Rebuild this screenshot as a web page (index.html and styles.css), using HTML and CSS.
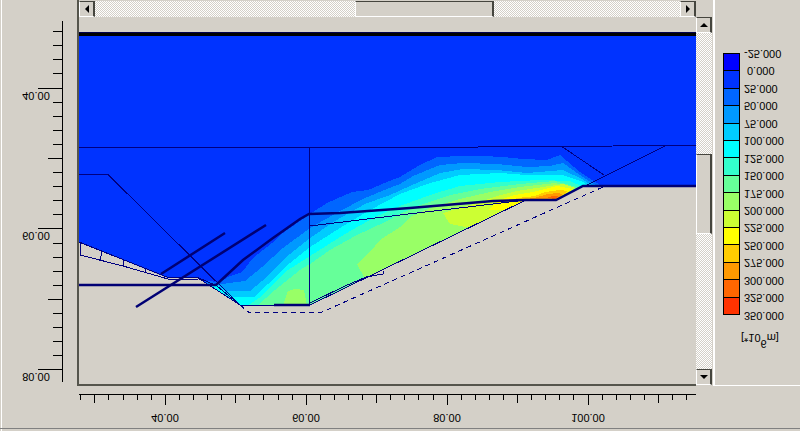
FILE: index.html
```html
<!DOCTYPE html>
<html lang="en">
<head>
<meta charset="utf-8">
<title>Bending moments</title>
<link rel="stylesheet" href="styles.css">
</head>
<body>
<main class="window">
  <div class="workspace">
    <svg class="ruler-left" viewBox="0 0 77 386" role="img" aria-label="Vertical ruler">
      <path class="tick" d="M62.500 21V382M53 31.500h9M53 45.500h9M53 59.500h9M53 73.500h9M38 88.500h24M53 102.500h9M53 116.500h9M53 130.500h9M53 144.500h9M48 158.500h14M53 172.500h9M53 186.500h9M53 200.500h9M53 214.500h9M38 228.500h24M53 243.500h9M53 257.500h9M53 271.500h9M53 285.500h9M48 299.500h14M53 313.500h9M53 327.500h9M53 341.500h9M53 355.500h9M38 369.500h24"/>
      <text class="label" x="36" y="100">40.00</text>
      <text class="label" x="36" y="240">60.00</text>
      <text class="label" x="36" y="381">80.00</text>
    </svg>

    <section class="view">
      <div class="scroll scroll-x">
        <button class="arrow" type="button" aria-label="Scroll left"><svg viewBox="0 0 8 8"><path d="M6 0V8L2 4z"/></svg></button>
        <div class="track"><span class="before"></span><span class="thumb"></span><span class="after"></span></div>
        <button class="arrow" type="button" aria-label="Scroll right"><svg viewBox="0 0 8 8"><path d="M2 0V8L6 4z"/></svg></button>
      </div>
      <svg class="plot" viewBox="79 17 617 367" role="img" aria-label="Contour plot">
        <defs>
          <clipPath id="soil"><path d="M79 36H696V186H583L556 200H526L310 305H240L198 278H168L79 242z"/></clipPath>
        </defs>
        <g clip-path="url(#soil)" shape-rendering="crispEdges">
          <path fill="#0033ff" d="M79 36H696V320H79z"/>
          <path fill="#0066ff" d="M205 281L220 282 228 277 242 272 253 258 272 243 280 235 310 214 327 203 352 192 368 190 387 182 400 177 420 165 437 157 463 156 483 156 503 157 523 159 547 160 560 155 567 161 580 172 603 187V320H200z"/>
          <path fill="#0099ff" d="M205 283L222 284 245 281 262 267 283 248 310 228 340 211 365 198 387 189 400 184 413 176 440 165 463 163 497 164 527 167 550 166 563 163 580 175 597 186V320H205z"/>
          <path fill="#00ccff" d="M205 284L218 285 226 291H250L262 281 285 258 310 238 335 221 365 204 390 195 410 186 440 173 463 169 497 170 527 173 563 170 582 179 593 186V320H205z"/>
          <path fill="#00ffff" d="M205 285L218 286 232 297H254L268 284 290 263 310 247 340 228 370 210 400 194 427 184 460 175 500 173 527 175 563 175 583 182 588 187V320H205z"/>
          <path fill="#33ffcc" d="M247 306L262 296 285 272 310 256 345 234 375 217 400 206 433 194 460 186 500 182 540 180 570 181 583 187V320H247z"/>
          <path fill="#66ff99" d="M257 306L275 290 300 270 310 264 330 250 355 236 385 222 400 214 420 205 450 195 480 189 520 184 555 181 577 187V320H257z"/>
          <path fill="#99ff66" d="M283 306L288 291 295 289 304 290 306 300 307 306zM357 264L370 252 380 240 400 227 410 217 430 208 460 199 490 192 520 187 555 183 576 188 556 200H526L383 274 364 277z"/>
          <path fill="#ccff33" d="M443 213L460 208 477 203 497 196 517 191 543 187 563 184 575 188 556 200H526L470 228 450 224z"/>
          <path fill="#ffff00" d="M489 210L493 205 503 199 515 195 533 192 557 186 573 189 556 200H526L507 210z"/>
          <path fill="#ffcc00" d="M512 201L517 198 535 196 545 192 560 190 568 191 556 200H526z"/>
          <path fill="#ff9900" d="M518 200L534 198 548 194 558 193 562 194 556 200z"/>
          <path fill="#ff6600" d="M547 198L552 196 558 196 556 199z"/>
        </g>
        <path fill="#00004d" d="M79 32H696V33H79z"/>
        <path fill="#000000" d="M79 33H696V36H79z"/>
        <g class="thin" shape-rendering="crispEdges">
          <path d="M79 147.500H427L530 146.500 696 145.500M309.500 147V305M79 174.500H108L241 306M561 146L604 175M583 187L665 146"/>
          <path d="M310 226L400 215 493 204 526 200M310 305L526 200M310 303L345 286 366 277 383 274V271"/>
          <path d="M79 242L168 277.500H198L217 286 240 305M80 255L123 266 168 279H198M80.500 243V255M102 252L100 261M123.500 259V266M145.500 268V272M198 278L240 305H310"/>
          <path class="dashed" d="M240 305L249 312.500H321L603 187"/>
        </g>
        <g class="thick">
          <path d="M79 285H216L243 260 273 238 300 219 309 214 340 213 410 208 493 201 526 200H556L583 186H696"/>
          <path d="M136 307L266 225M161 274L225 233"/>
          <path d="M274 305H310"/>
        </g>
      </svg>
    </section>

    <div class="scroll scroll-y">
      <button class="arrow" type="button" aria-label="Scroll up"><svg viewBox="0 0 8 8"><path d="M0 6H8L4 2z"/></svg></button>
      <div class="track"><span class="before"></span><span class="thumb"></span><span class="after"></span></div>
      <button class="arrow" type="button" aria-label="Scroll down"><svg viewBox="0 0 8 8"><path d="M0 2H8L4 6z"/></svg></button>
    </div>

    <aside class="legend">
      <div class="scale">
        <div class="swatches">
          <i class="c1"></i><i class="c2"></i><i class="c3"></i><i class="c4"></i><i class="c5"></i><i class="c6"></i><i class="c7"></i><i class="c8"></i><i class="c9"></i><i class="c10"></i><i class="c11"></i><i class="c12"></i><i class="c13"></i><i class="c14"></i><i class="c15"></i>
        </div>
        <ul class="values">
          <li>-25.000</li><li class="zero">0.000</li><li>25.000</li><li>50.000</li><li>75.000</li><li>100.000</li><li>125.000</li><li>150.000</li><li>175.000</li><li>200.000</li><li>225.000</li><li>250.000</li><li>275.000</li><li>300.000</li><li>325.000</li><li>350.000</li>
        </ul>
      </div>
      <p class="unit">[*10<sup>6</sup>m]</p>
    </aside>
  </div>

  <div class="ruler-row">
    <svg class="ruler-bottom" viewBox="79 386 617 42" role="img" aria-label="Horizontal ruler">
      <path class="tick" d="M79 394.500H696M80.500 394v6M94.500 394v9M108.500 394v6M123.500 394v6M137.500 394v6M151.500 394v6M165.500 394v11M179.500 394v6M193.500 394v6M207.500 394v6M221.500 394v6M235.500 394v9M249.500 394v6M263.500 394v6M278.500 394v6M292.500 394v6M306.500 394v11M320.500 394v6M334.500 394v6M348.500 394v6M362.500 394v6M376.500 394v9M390.500 394v6M404.500 394v6M418.500 394v6M433.500 394v6M447.500 394v11M461.500 394v6M475.500 394v6M489.500 394v6M503.500 394v6M517.500 394v9M531.500 394v6M545.500 394v6M559.500 394v6M573.500 394v6M588.500 394v11M602.500 394v6M616.500 394v6M630.500 394v6M644.500 394v6M658.500 394v9M672.500 394v6M686.500 394v6"/>
      <text class="label" x="165" y="422">40.00</text>
      <text class="label" x="306" y="422">60.00</text>
      <text class="label" x="447" y="422">80.00</text>
      <text class="label" x="588" y="422">100.00</text>
    </svg>
  </div>
</main>
</body>
</html>
```
FILE: styles.css
```css
* { box-sizing: border-box; }

body {
  margin: 0;
  background: #d4d0c8;
  color: #000;
  font: 11px/16px "Liberation Sans", Arial, sans-serif;
}

svg { display: block; }

.window {
  min-height: 100vh;
  background: linear-gradient(#fff, #fff) 1px 0 / 1px 100% no-repeat;
}

.workspace {
  display: grid;
  grid-template-columns: 77px 1fr 17px 87px;
}

.ruler-left { width: 77px; }

.tick {
  fill: none;
  stroke: #000;
  shape-rendering: crispEdges;
}

.label,
.values li,
.unit { transform: scaleY(-1); }

.label {
  text-anchor: middle;
  transform-box: fill-box;
  transform-origin: center;
}

.view {
  padding-top: 1px;
  border-left: 2px solid #55554c;
  border-bottom: 2px solid #55554c;
}

.plot { width: 100%; }

.thin {
  fill: none;
  stroke: #000080;
}

.dashed { stroke-dasharray: 5 4; }

.thick {
  fill: none;
  stroke: #000074;
  stroke-width: 2.5;
}

.scroll { display: flex; }

.scroll-x { height: 16px; }

.scroll-y {
  flex-direction: column;
  padding: 17px 1px 1px 0;
}

.arrow,
.thumb {
  background: #d4d0c8;
  border: solid;
  border-width: 1px 2px 1px 1px;
  border-color: #45453e #45453e #fff #fff;
}

.arrow {
  display: grid;
  place-items: center;
  flex: none;
  width: 16px;
  height: 16px;
  padding: 0;
}

.arrow svg { width: 8px; height: 8px; }

.track {
  display: flex;
  flex: 1;
  background: repeating-conic-gradient(#fff 0 25%, #d4d0c8 0 50%) 0 0 / 2px 2px;
}

.scroll-y .track { flex-direction: column; }

.scroll-x .before { flex: 261; }
.scroll-x .thumb { flex: 137; }
.scroll-x .after { flex: 187; }
.scroll-y .before { flex: 122; }
.scroll-y .thumb { flex: 79; }
.scroll-y .after { flex: 136; }

.legend {
  padding: 45px 0 0 8px;
  border-left: 2px solid #fff;
  border-bottom: 1px solid #fff;
}

.scale {
  display: flex;
  gap: 4px;
}

.swatches {
  display: flex;
  flex-direction: column;
  width: 17px;
  height: 262px;
  margin-top: 8px;
  border: solid #000;
  border-width: 1px 1px 0;
}

.swatches i {
  flex: 1;
  border-bottom: 1px solid #000;
}

.values {
  display: flex;
  flex-direction: column;
  height: 279px;
  margin: 0;
  padding: 0;
  list-style: none;
}

.values li { flex: 1; }
.values .zero { padding-left: 3px; }

.unit {
  margin: 6px 0 0 18px;
}

.unit sup {
  font-size: 11px;
  line-height: 0;
  vertical-align: -webkit-baseline-middle;
  vertical-align: 6px;
}

.c1 { background: #0000ff; }
.c2 { background: #0033ff; }
.c3 { background: #0066ff; }
.c4 { background: #0099ff; }
.c5 { background: #00ccff; }
.c6 { background: #00ffff; }
.c7 { background: #33ffcc; }
.c8 { background: #66ff99; }
.c9 { background: #99ff66; }
.c10 { background: #ccff33; }
.c11 { background: #ffff00; }
.c12 { background: #ffcc00; }
.c13 { background: #ff9900; }
.c14 { background: #ff6600; }
.c15 { background: #ff3300; }

.ruler-row {
  padding: 0 104px 0 79px;
  border-bottom: 1px solid #808080;
}

.ruler-bottom { width: 100%; }
```
